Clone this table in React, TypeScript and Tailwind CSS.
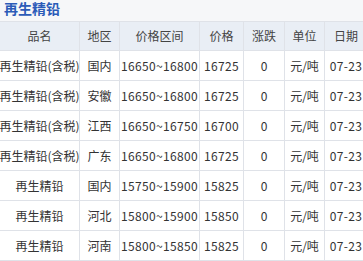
import React from "react";

const rows = [
  ["再生精铅(含税)", "国内", "16650~16800", "16725"],
  ["再生精铅(含税)", "安徽", "16650~16800", "16725"],
  ["再生精铅(含税)", "江西", "16650~16750", "16700"],
  ["再生精铅(含税)", "广东", "16650~16800", "16725"],
  ["再生精铅", "国内", "15750~15900", "15825"],
  ["再生精铅", "河北", "15800~15900", "15850"],
  ["再生精铅", "河南", "15800~15850", "15825"],
];

const Cell = ({ w, children, last, num }: { w: string; children: React.ReactNode; last?: boolean; num?: boolean }) => (
  <div className={`${w} shrink-0 h-full flex items-center justify-center whitespace-nowrap ${num ? "tracking-[0.35px]" : ""} ${last ? "" : "border-r border-[#dfe2e8]"}`}>
    {children}
  </div>
);

export default function App() {
  const widths = ["w-[80px]", "w-[40px]", "w-[80px]", "w-[44px]", "w-[41px]", "w-[40px]", "w-[42px]"];
  const header = ["品名", "地区", "价格区间", "价格", "涨跌", "单位", "日期"];
  return (
    <div
      className="w-[363px] h-[261px] overflow-hidden bg-white text-[#333] text-[12px]"
      style={{ fontFamily: '"Noto Sans CJK SC", "Noto Sans", sans-serif' }}
    >
      <div className="h-[21px] bg-[#f6f7f9] px-[4px] text-[14px] leading-[17px] font-bold text-[#2b5bb8]">再生精铅</div>
      <div className="flex h-[30px] bg-[#e9eef5] border-t border-b border-[#dfe2e8] text-[#444]">
        {header.map((h, i) => (
          <Cell key={i} w={widths[i]} last={i === 6}>{h}</Cell>
        ))}
      </div>
      {rows.map((r, ri) => (
        <div key={ri} className="flex h-[30px] border-b border-[#dfe2e8]">
          <Cell w={widths[0]}>{r[0]}</Cell>
          <Cell w={widths[1]}>{r[1]}</Cell>
          <Cell w={widths[2]} num>{r[2]}</Cell>
          <Cell w={widths[3]} num>{r[3]}</Cell>
          <Cell w={widths[4]}>0</Cell>
          <Cell w={widths[5]}>元/吨</Cell>
          <Cell w={widths[6]} last num>07-23</Cell>
        </div>
      ))}
    </div>
  );
}
